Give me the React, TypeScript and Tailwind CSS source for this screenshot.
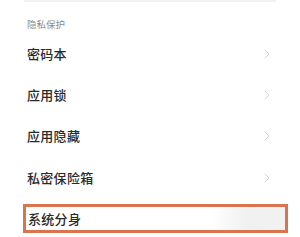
import { ChevronRight } from 'lucide-react';

const items = ['密码本', '应用锁', '应用隐藏', '私密保险箱'];

export default function App() {
  return (
    <div
      className="w-[300px] h-[237px] overflow-hidden bg-white"
      style={{ fontFamily: '"Noto Sans CJK SC", "Noto Sans", sans-serif' }}
    >
      <div className="mx-[24px] h-[2px] bg-[#f1f1f1]" />
      <div className="pl-[27px] pt-[15px] h-[31px] text-[9.5px] leading-[14px] text-[#8a8a8a]">
        隐私保护
      </div>
      {items.map(label => (
        <div key={label} className="flex items-center h-[41.3px] pl-[27px] pr-[25px]">
          <span className="flex-1 text-[13px] tracking-[0.3px] font-medium text-[#2a2a2a]">{label}</span>
          <ChevronRight className="w-[16px] h-[16px] text-[#d2d2d2]" strokeWidth={1.4} />
        </div>
      ))}
      <div className="ml-[23px] mr-[12px] mt-[6px] h-[29px] border-[3px] border-[#d9744f] flex items-center">
        <span className="pl-[2px] flex-1 text-[13px] tracking-[0.3px] font-medium text-[#2a2a2a]">系统分身</span>
        <div className="w-[74px] h-full bg-gradient-to-r from-[#ffffff] via-[#f0f0f0] to-[#f2f2f2]" />
      </div>
    </div>
  );
}
